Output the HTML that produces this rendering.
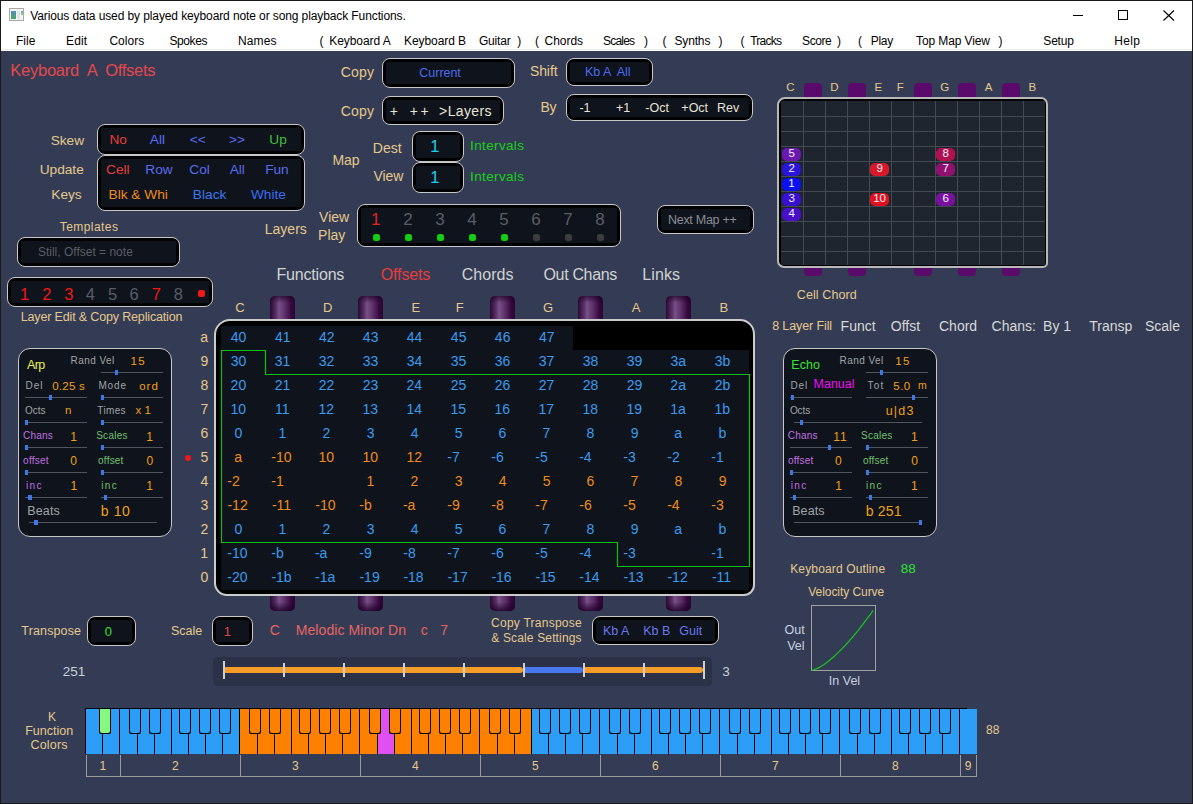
<!DOCTYPE html>
<html><head><meta charset="utf-8">
<style>
html,body{margin:0;padding:0;}
body{width:1193px;height:804px;overflow:hidden;position:relative;background:#333c54;font-family:"Liberation Sans",sans-serif;}
.t{position:absolute;white-space:pre;}
.r{position:absolute;}
svg.r{overflow:visible;}
</style></head><body>

<div class="r" style="left:0px;top:0px;width:1193px;height:51px;background:#fff"></div>
<div class="r" style="left:0px;top:49px;width:1193px;height:1px;background:#ececec"></div>
<div class="r" style="left:9px;top:8px;width:13px;height:11px;border:1px solid #a8a8a8;background:#f4f4f4"></div>
<div class="r" style="left:11px;top:11px;width:5px;height:8px;background:linear-gradient(#5a8ac0,#4aa860)"></div>
<div class="r" style="left:17px;top:11px;width:3px;height:8px;background:#e0e0e0"></div>
<div class="r" style="left:21px;top:11px;width:2px;height:4px;background:linear-gradient(#7aa0d0,#8ad080)"></div>
<div class="t" style="left:30.20px;top:9.94px;font-size:12px;line-height:12px;color:#000;letter-spacing:-0.104px;">Various data used by played keyboard note or song playback Functions.</div>
<div class="r" style="left:1073px;top:15px;width:10px;height:1px;background:#000"></div>
<div class="r" style="left:1118px;top:10px;width:8px;height:8px;border:1px solid #000"></div>
<svg class="r" style="left:1163px;top:10px" width="12" height="11"><path d="M0.5 0.5 L11 10.5 M11 0.5 L0.5 10.5" stroke="#000" stroke-width="1.1"/></svg>
<div class="t" style="left:16.00px;top:35.14px;font-size:12px;line-height:12px;color:#000;letter-spacing:0.033px;">File</div>
<div class="t" style="left:66.00px;top:35.14px;font-size:12px;line-height:12px;color:#000;letter-spacing:0.133px;">Edit</div>
<div class="t" style="left:109.40px;top:35.14px;font-size:12px;line-height:12px;color:#000;letter-spacing:0.060px;">Colors</div>
<div class="t" style="left:169.50px;top:35.14px;font-size:12px;line-height:12px;color:#000;letter-spacing:-0.420px;">Spokes</div>
<div class="t" style="left:238.00px;top:35.14px;font-size:12px;line-height:12px;color:#000;letter-spacing:0.100px;">Names</div>
<div class="t" style="left:319.50px;top:35.14px;font-size:12px;line-height:12px;color:#000;">(</div>
<div class="t" style="left:329.30px;top:35.14px;font-size:12px;line-height:12px;color:#000;letter-spacing:-0.078px;">Keyboard A</div>
<div class="t" style="left:404.00px;top:35.14px;font-size:12px;line-height:12px;color:#000;letter-spacing:-0.078px;">Keyboard B</div>
<div class="t" style="left:478.90px;top:35.14px;font-size:12px;line-height:12px;color:#000;letter-spacing:-0.160px;">Guitar</div>
<div class="t" style="left:517.30px;top:35.14px;font-size:12px;line-height:12px;color:#000;">)</div>
<div class="t" style="left:535.10px;top:35.14px;font-size:12px;line-height:12px;color:#000;">(</div>
<div class="t" style="left:544.60px;top:35.14px;font-size:12px;line-height:12px;color:#000;letter-spacing:-0.040px;">Chords</div>
<div class="t" style="left:603.00px;top:35.14px;font-size:12px;line-height:12px;color:#000;letter-spacing:-0.780px;">Scales</div>
<div class="t" style="left:643.90px;top:35.14px;font-size:12px;line-height:12px;color:#000;">)</div>
<div class="t" style="left:662.50px;top:35.14px;font-size:12px;line-height:12px;color:#000;">(</div>
<div class="t" style="left:674.50px;top:35.14px;font-size:12px;line-height:12px;color:#000;letter-spacing:-0.160px;">Synths</div>
<div class="t" style="left:718.40px;top:35.14px;font-size:12px;line-height:12px;color:#000;">)</div>
<div class="t" style="left:740.60px;top:35.14px;font-size:12px;line-height:12px;color:#000;">(</div>
<div class="t" style="left:750.20px;top:35.14px;font-size:12px;line-height:12px;color:#000;letter-spacing:-0.760px;">Tracks</div>
<div class="t" style="left:802.10px;top:35.14px;font-size:12px;line-height:12px;color:#000;letter-spacing:-0.425px;">Score</div>
<div class="t" style="left:836.90px;top:35.14px;font-size:12px;line-height:12px;color:#000;">)</div>
<div class="t" style="left:857.90px;top:35.14px;font-size:12px;line-height:12px;color:#000;">(</div>
<div class="t" style="left:870.80px;top:35.14px;font-size:12px;line-height:12px;color:#000;letter-spacing:-0.300px;">Play</div>
<div class="t" style="left:916.10px;top:35.14px;font-size:12px;line-height:12px;color:#000;letter-spacing:-0.118px;">Top Map View</div>
<div class="t" style="left:998.60px;top:35.14px;font-size:12px;line-height:12px;color:#000;">)</div>
<div class="t" style="left:1043.30px;top:35.14px;font-size:12px;line-height:12px;color:#000;letter-spacing:-0.175px;">Setup</div>
<div class="t" style="left:1114.30px;top:35.14px;font-size:12px;line-height:12px;color:#000;letter-spacing:0.300px;">Help</div>
<div class="t" style="left:10.35px;top:61.83px;font-size:16.5px;line-height:16.5px;color:#e5484d;letter-spacing:-0.258px;">Keyboard  A  Offsets</div>
<div class="t" style="left:340.70px;top:64.95px;font-size:14px;line-height:14px;color:#e6c88c;letter-spacing:0.200px;">Copy</div>
<div class="r" style="left:382px;top:58px;width:133px;height:30px;box-sizing:border-box;border:1px solid #c8c8c8;border-radius:8px;background:#000"></div>
<div class="r" style="left:386px;top:62px;width:125px;height:22px;background:#0f131b;border-radius:1px"></div>
<div class="t" style="left:419.35px;top:67.02px;font-size:12.5px;line-height:12.5px;color:#4a6cf0;letter-spacing:-0.033px;">Current</div>
<div class="t" style="left:340.70px;top:104.15px;font-size:14px;line-height:14px;color:#e6c88c;letter-spacing:0.200px;">Copy</div>
<div class="r" style="left:382px;top:96px;width:122px;height:29px;box-sizing:border-box;border:1px solid #c8c8c8;border-radius:8px;background:#000"></div>
<div class="r" style="left:386px;top:100px;width:114px;height:21px;background:#0f131b;border-radius:1px"></div>
<div class="t" style="left:389.70px;top:103.85px;font-size:14px;line-height:14px;color:#e8e4d8;">+</div>
<div class="t" style="left:409.80px;top:103.85px;font-size:14px;line-height:14px;color:#e8e4d8;letter-spacing:2.600px;">++</div>
<div class="t" style="left:439.10px;top:103.85px;font-size:14px;line-height:14px;color:#e8e4d8;letter-spacing:0.367px;">&gt;Layers</div>
<div class="t" style="left:529.90px;top:64.15px;font-size:14px;line-height:14px;color:#e6c88c;letter-spacing:-0.075px;">Shift</div>
<div class="r" style="left:566px;top:58px;width:87px;height:28px;box-sizing:border-box;border:1px solid #c8c8c8;border-radius:8px;background:#000"></div>
<div class="r" style="left:570px;top:62px;width:79px;height:20px;background:#0f131b;border-radius:1px"></div>
<div class="t" style="left:584.95px;top:66.12px;font-size:12.5px;line-height:12.5px;color:#4a6cf0;letter-spacing:-0.037px;">Kb A  All</div>
<div class="t" style="left:540.40px;top:100.45px;font-size:14px;line-height:14px;color:#e6c88c;letter-spacing:-0.200px;">By</div>
<div class="r" style="left:566px;top:94px;width:187px;height:27px;box-sizing:border-box;border:1px solid #c8c8c8;border-radius:8px;background:#000"></div>
<div class="r" style="left:570px;top:98px;width:179px;height:19px;background:#0f131b;border-radius:1px"></div>
<div class="t" style="left:579.45px;top:102.42px;font-size:12.5px;line-height:12.5px;color:#e8e4d8;">-1</div>
<div class="t" style="left:615.95px;top:102.42px;font-size:12.5px;line-height:12.5px;color:#e8e4d8;">+1</div>
<div class="t" style="left:645.25px;top:102.42px;font-size:12.5px;line-height:12.5px;color:#e8e4d8;">-Oct</div>
<div class="t" style="left:681.35px;top:102.42px;font-size:12.5px;line-height:12.5px;color:#e8e4d8;">+Oct</div>
<div class="t" style="left:716.95px;top:102.42px;font-size:12.5px;line-height:12.5px;color:#e8e4d8;">Rev</div>
<div class="t" style="left:50.65px;top:134.00px;font-size:13.7px;line-height:13.7px;color:#e6c88c;">Skew</div>
<div class="r" style="left:97px;top:124px;width:208px;height:31px;box-sizing:border-box;border:1px solid #c8c8c8;border-radius:8px;background:#000"></div>
<div class="r" style="left:101px;top:128px;width:200px;height:23px;background:#0f131b;border-radius:1px"></div>
<div class="t" style="left:109.45px;top:133.00px;font-size:13.7px;line-height:13.7px;color:#e83c3c;">No</div>
<div class="t" style="left:149.75px;top:133.00px;font-size:13.7px;line-height:13.7px;color:#5a6cf0;">All</div>
<div class="t" style="left:189.85px;top:133.00px;font-size:13.7px;line-height:13.7px;color:#5a6cf0;">&lt;&lt;</div>
<div class="t" style="left:229.05px;top:133.00px;font-size:13.7px;line-height:13.7px;color:#5a6cf0;">&gt;&gt;</div>
<div class="t" style="left:269.35px;top:133.00px;font-size:13.7px;line-height:13.7px;color:#40c040;">Up</div>
<div class="t" style="left:39.65px;top:163.40px;font-size:13.7px;line-height:13.7px;color:#e6c88c;">Update</div>
<div class="r" style="left:97px;top:155px;width:208px;height:56px;box-sizing:border-box;border:1px solid #c8c8c8;border-radius:8px;background:#000"></div>
<div class="r" style="left:101px;top:159px;width:200px;height:48px;background:#0f131b;border-radius:1px"></div>
<div class="t" style="left:106.05px;top:163.40px;font-size:13.7px;line-height:13.7px;color:#e83c3c;">Cell</div>
<div class="t" style="left:145.25px;top:163.40px;font-size:13.7px;line-height:13.7px;color:#5a6cf0;">Row</div>
<div class="t" style="left:189.25px;top:163.40px;font-size:13.7px;line-height:13.7px;color:#5a6cf0;">Col</div>
<div class="t" style="left:229.65px;top:163.40px;font-size:13.7px;line-height:13.7px;color:#5a6cf0;">All</div>
<div class="t" style="left:265.15px;top:163.40px;font-size:13.7px;line-height:13.7px;color:#5a6cf0;">Fun</div>
<div class="t" style="left:51.25px;top:188.10px;font-size:13.7px;line-height:13.7px;color:#e6c88c;">Keys</div>
<div class="t" style="left:108.55px;top:188.10px;font-size:13.7px;line-height:13.7px;color:#f08c1c;">Blk &amp; Whi</div>
<div class="t" style="left:192.85px;top:188.10px;font-size:13.7px;line-height:13.7px;color:#3c78f0;">Black</div>
<div class="t" style="left:250.95px;top:188.10px;font-size:13.7px;line-height:13.7px;color:#3c6cf0;">White</div>
<div class="t" style="left:332.40px;top:152.85px;font-size:14px;line-height:14px;color:#e6c88c;">Map</div>
<div class="t" style="left:372.80px;top:140.85px;font-size:14px;line-height:14px;color:#e6c88c;">Dest</div>
<div class="t" style="left:373.40px;top:168.55px;font-size:14px;line-height:14px;color:#e6c88c;">View</div>
<div class="r" style="left:412px;top:131px;width:52px;height:31px;box-sizing:border-box;border:1px solid #c8c8c8;border-radius:8px;background:#000"></div>
<div class="r" style="left:416px;top:135px;width:44px;height:23px;background:#0f131b;border-radius:1px"></div>
<div class="r" style="left:412px;top:162px;width:52px;height:31px;box-sizing:border-box;border:1px solid #c8c8c8;border-radius:8px;background:#000"></div>
<div class="r" style="left:416px;top:166px;width:44px;height:23px;background:#0f131b;border-radius:1px"></div>
<div class="t" style="left:430.25px;top:138.33px;font-size:16.5px;line-height:16.5px;color:#18d0f0;">1</div>
<div class="t" style="left:430.25px;top:169.13px;font-size:16.5px;line-height:16.5px;color:#18d0f0;">1</div>
<div class="t" style="left:470.05px;top:139.37px;font-size:13.5px;line-height:13.5px;color:#18d018;letter-spacing:0.363px;">Intervals</div>
<div class="t" style="left:470.05px;top:170.17px;font-size:13.5px;line-height:13.5px;color:#18d018;letter-spacing:0.363px;">Intervals</div>
<div class="t" style="left:264.80px;top:221.65px;font-size:14px;line-height:14px;color:#e6c88c;">Layers</div>
<div class="t" style="left:319.10px;top:209.85px;font-size:14px;line-height:14px;color:#e6c88c;">View</div>
<div class="t" style="left:318.10px;top:228.45px;font-size:14px;line-height:14px;color:#e6c88c;">Play</div>
<div class="r" style="left:357px;top:204px;width:264px;height:43px;box-sizing:border-box;border:1px solid #c8c8c8;border-radius:8px;background:#000"></div>
<div class="r" style="left:361px;top:208px;width:256px;height:35px;background:#0f131b;border-radius:1px"></div>
<div class="t" style="left:371.00px;top:210.71px;font-size:17px;line-height:17px;color:#e02828;">1</div>
<div class="r" style="left:372.5px;top:233.9px;width:7.1px;height:7.1px;background:#10d010;border-radius:2.5px"></div>
<div class="t" style="left:403.30px;top:210.71px;font-size:17px;line-height:17px;color:#5a5e66;">2</div>
<div class="r" style="left:404.5px;top:233.9px;width:7.1px;height:7.1px;background:#10d010;border-radius:2.5px"></div>
<div class="t" style="left:435.35px;top:210.71px;font-size:17px;line-height:17px;color:#5a5e66;">3</div>
<div class="r" style="left:436.5px;top:233.9px;width:7.1px;height:7.1px;background:#10d010;border-radius:2.5px"></div>
<div class="t" style="left:467.30px;top:210.71px;font-size:17px;line-height:17px;color:#5a5e66;">4</div>
<div class="r" style="left:468.5px;top:233.9px;width:7.1px;height:7.1px;background:#10d010;border-radius:2.5px"></div>
<div class="t" style="left:499.25px;top:210.71px;font-size:17px;line-height:17px;color:#5a5e66;">5</div>
<div class="r" style="left:500.5px;top:233.9px;width:7.1px;height:7.1px;background:#10d010;border-radius:2.5px"></div>
<div class="t" style="left:531.25px;top:210.71px;font-size:17px;line-height:17px;color:#5a5e66;">6</div>
<div class="r" style="left:532.5px;top:233.9px;width:7.1px;height:7.1px;background:#3c3c3c;border-radius:2.5px"></div>
<div class="t" style="left:563.30px;top:210.71px;font-size:17px;line-height:17px;color:#5a5e66;">7</div>
<div class="r" style="left:564.5px;top:233.9px;width:7.1px;height:7.1px;background:#3c3c3c;border-radius:2.5px"></div>
<div class="t" style="left:595.30px;top:210.71px;font-size:17px;line-height:17px;color:#5a5e66;">8</div>
<div class="r" style="left:596.5px;top:233.9px;width:7.1px;height:7.1px;background:#3c3c3c;border-radius:2.5px"></div>
<div class="t" style="left:59.80px;top:220.84px;font-size:12px;line-height:12px;color:#e6c88c;letter-spacing:0.425px;">Templates</div>
<div class="r" style="left:17px;top:237px;width:163px;height:30px;box-sizing:border-box;border:1px solid #c8c8c8;border-radius:8px;background:#000"></div>
<div class="r" style="left:21px;top:241px;width:155px;height:22px;background:#0f131b;border-radius:1px"></div>
<div class="t" style="left:37.90px;top:245.84px;font-size:12px;line-height:12px;color:#5a5e66;letter-spacing:0.005px;">Still, Offset = note</div>
<div class="r" style="left:7px;top:277px;width:206px;height:30px;box-sizing:border-box;border:1px solid #c8c8c8;border-radius:8px;background:#000"></div>
<div class="r" style="left:11px;top:281px;width:198px;height:22px;background:#0f131b;border-radius:1px"></div>
<div class="t" style="left:20.05px;top:285.83px;font-size:16.5px;line-height:16.5px;color:#f01818;">1</div>
<div class="t" style="left:42.35px;top:285.83px;font-size:16.5px;line-height:16.5px;color:#f01818;">2</div>
<div class="t" style="left:64.20px;top:285.83px;font-size:16.5px;line-height:16.5px;color:#f01818;">3</div>
<div class="t" style="left:85.80px;top:285.83px;font-size:16.5px;line-height:16.5px;color:#5a5e66;">4</div>
<div class="t" style="left:107.90px;top:285.83px;font-size:16.5px;line-height:16.5px;color:#5a5e66;">5</div>
<div class="t" style="left:129.60px;top:285.83px;font-size:16.5px;line-height:16.5px;color:#5a5e66;">6</div>
<div class="t" style="left:151.85px;top:285.83px;font-size:16.5px;line-height:16.5px;color:#f01818;">7</div>
<div class="t" style="left:173.75px;top:285.83px;font-size:16.5px;line-height:16.5px;color:#5a5e66;">8</div>
<div class="r" style="left:198px;top:290px;width:7px;height:7px;background:#f01818;border-radius:2px"></div>
<div class="t" style="left:20.75px;top:311.42px;font-size:12.5px;line-height:12.5px;color:#e6c88c;letter-spacing:-0.154px;">Layer Edit &amp; Copy Replication</div>
<div class="r" style="left:657px;top:205px;width:97px;height:29px;box-sizing:border-box;border:1px solid #c8c8c8;border-radius:8px;background:#000"></div>
<div class="r" style="left:661px;top:209px;width:89px;height:21px;background:#0f131b;border-radius:1px"></div>
<div class="t" style="left:667.95px;top:213.72px;font-size:12.5px;line-height:12.5px;color:#8a8e96;letter-spacing:-0.270px;">Next Map ++</div>
<div class="t" style="left:276.50px;top:266.56px;font-size:16px;line-height:16px;color:#d2d2d2;letter-spacing:-0.188px;">Functions</div>
<div class="t" style="left:380.80px;top:266.56px;font-size:16px;line-height:16px;color:#e83c3c;letter-spacing:-0.150px;">Offsets</div>
<div class="t" style="left:461.80px;top:266.56px;font-size:16px;line-height:16px;color:#d2d2d2;letter-spacing:0.020px;">Chords</div>
<div class="t" style="left:543.50px;top:266.56px;font-size:16px;line-height:16px;color:#d2d2d2;letter-spacing:-0.338px;">Out Chans</div>
<div class="t" style="left:642.20px;top:266.56px;font-size:16px;line-height:16px;color:#d2d2d2;letter-spacing:0.125px;">Links</div>
<div class="t" style="left:235.25px;top:301.00px;font-size:13px;line-height:13px;color:#e6c88c;">C</div>
<div class="r" style="left:270.25px;top:296px;width:25px;height:23px;border-radius:5px 5px 0 0;background:linear-gradient(90deg,#2a0834 0%,#5a3468 25%,#7a5088 36%,#5c3068 60%,#36083e 85%,#2a0632 100%)"></div>
<div class="r" style="left:270.25px;top:296px;width:25px;height:7px;border-radius:5px 5px 0 0;background:linear-gradient(rgba(30,0,40,0.7),rgba(30,0,40,0))"></div>
<div class="r" style="left:270.25px;top:595px;width:25px;height:16px;border-radius:0 0 5px 5px;background:linear-gradient(90deg,#2a0834 0%,#5a3468 25%,#7a5088 36%,#5c3068 60%,#36083e 85%,#2a0632 100%)"></div>
<div class="r" style="left:270.25px;top:602px;width:25px;height:9px;border-radius:0 0 5px 5px;background:linear-gradient(rgba(30,0,40,0),rgba(30,0,40,0.85))"></div>
<div class="t" style="left:323.10px;top:301.00px;font-size:13px;line-height:13px;color:#e6c88c;">D</div>
<div class="r" style="left:358.25px;top:296px;width:25px;height:23px;border-radius:5px 5px 0 0;background:linear-gradient(90deg,#2a0834 0%,#5a3468 25%,#7a5088 36%,#5c3068 60%,#36083e 85%,#2a0632 100%)"></div>
<div class="r" style="left:358.25px;top:296px;width:25px;height:7px;border-radius:5px 5px 0 0;background:linear-gradient(rgba(30,0,40,0.7),rgba(30,0,40,0))"></div>
<div class="r" style="left:358.25px;top:595px;width:25px;height:16px;border-radius:0 0 5px 5px;background:linear-gradient(90deg,#2a0834 0%,#5a3468 25%,#7a5088 36%,#5c3068 60%,#36083e 85%,#2a0632 100%)"></div>
<div class="r" style="left:358.25px;top:602px;width:25px;height:9px;border-radius:0 0 5px 5px;background:linear-gradient(rgba(30,0,40,0),rgba(30,0,40,0.85))"></div>
<div class="t" style="left:411.45px;top:301.00px;font-size:13px;line-height:13px;color:#e6c88c;">E</div>
<div class="t" style="left:455.80px;top:301.00px;font-size:13px;line-height:13px;color:#e6c88c;">F</div>
<div class="r" style="left:490.25px;top:296px;width:25px;height:23px;border-radius:5px 5px 0 0;background:linear-gradient(90deg,#2a0834 0%,#5a3468 25%,#7a5088 36%,#5c3068 60%,#36083e 85%,#2a0632 100%)"></div>
<div class="r" style="left:490.25px;top:296px;width:25px;height:7px;border-radius:5px 5px 0 0;background:linear-gradient(rgba(30,0,40,0.7),rgba(30,0,40,0))"></div>
<div class="r" style="left:490.25px;top:595px;width:25px;height:16px;border-radius:0 0 5px 5px;background:linear-gradient(90deg,#2a0834 0%,#5a3468 25%,#7a5088 36%,#5c3068 60%,#36083e 85%,#2a0632 100%)"></div>
<div class="r" style="left:490.25px;top:602px;width:25px;height:9px;border-radius:0 0 5px 5px;background:linear-gradient(rgba(30,0,40,0),rgba(30,0,40,0.85))"></div>
<div class="t" style="left:543.10px;top:301.00px;font-size:13px;line-height:13px;color:#e6c88c;">G</div>
<div class="r" style="left:578.25px;top:296px;width:25px;height:23px;border-radius:5px 5px 0 0;background:linear-gradient(90deg,#2a0834 0%,#5a3468 25%,#7a5088 36%,#5c3068 60%,#36083e 85%,#2a0632 100%)"></div>
<div class="r" style="left:578.25px;top:296px;width:25px;height:7px;border-radius:5px 5px 0 0;background:linear-gradient(rgba(30,0,40,0.7),rgba(30,0,40,0))"></div>
<div class="r" style="left:578.25px;top:595px;width:25px;height:16px;border-radius:0 0 5px 5px;background:linear-gradient(90deg,#2a0834 0%,#5a3468 25%,#7a5088 36%,#5c3068 60%,#36083e 85%,#2a0632 100%)"></div>
<div class="r" style="left:578.25px;top:602px;width:25px;height:9px;border-radius:0 0 5px 5px;background:linear-gradient(rgba(30,0,40,0),rgba(30,0,40,0.85))"></div>
<div class="t" style="left:631.65px;top:301.00px;font-size:13px;line-height:13px;color:#e6c88c;">A</div>
<div class="r" style="left:666.25px;top:296px;width:25px;height:23px;border-radius:5px 5px 0 0;background:linear-gradient(90deg,#2a0834 0%,#5a3468 25%,#7a5088 36%,#5c3068 60%,#36083e 85%,#2a0632 100%)"></div>
<div class="r" style="left:666.25px;top:296px;width:25px;height:7px;border-radius:5px 5px 0 0;background:linear-gradient(rgba(30,0,40,0.7),rgba(30,0,40,0))"></div>
<div class="r" style="left:666.25px;top:595px;width:25px;height:16px;border-radius:0 0 5px 5px;background:linear-gradient(90deg,#2a0834 0%,#5a3468 25%,#7a5088 36%,#5c3068 60%,#36083e 85%,#2a0632 100%)"></div>
<div class="r" style="left:666.25px;top:602px;width:25px;height:9px;border-radius:0 0 5px 5px;background:linear-gradient(rgba(30,0,40,0),rgba(30,0,40,0.85))"></div>
<div class="t" style="left:719.50px;top:301.00px;font-size:13px;line-height:13px;color:#e6c88c;">B</div>
<div class="r" style="left:214px;top:319px;width:541px;height:277px;box-sizing:border-box;border:2px solid #cccccc;border-radius:16px 15px 11px 13px;background:#000"></div>
<div class="r" style="left:221px;top:326px;width:352px;height:24px;background:#0f131b"></div>
<div class="r" style="left:221px;top:350px;width:528px;height:240px;background:#0f131b"></div>
<div class="t" style="left:200.20px;top:329.65px;font-size:14px;line-height:14px;color:#e6c88c;">a</div>
<div class="t" style="left:230.80px;top:329.65px;font-size:14px;line-height:14px;color:#3a9cf0;">40</div>
<div class="t" style="left:274.90px;top:329.65px;font-size:14px;line-height:14px;color:#3a9cf0;">41</div>
<div class="t" style="left:318.90px;top:329.65px;font-size:14px;line-height:14px;color:#3a9cf0;">42</div>
<div class="t" style="left:362.85px;top:329.65px;font-size:14px;line-height:14px;color:#3a9cf0;">43</div>
<div class="t" style="left:406.75px;top:329.65px;font-size:14px;line-height:14px;color:#3a9cf0;">44</div>
<div class="t" style="left:450.85px;top:329.65px;font-size:14px;line-height:14px;color:#3a9cf0;">45</div>
<div class="t" style="left:494.85px;top:329.65px;font-size:14px;line-height:14px;color:#3a9cf0;">46</div>
<div class="t" style="left:538.90px;top:329.65px;font-size:14px;line-height:14px;color:#3a9cf0;">47</div>
<div class="t" style="left:200.55px;top:353.65px;font-size:14px;line-height:14px;color:#e6c88c;">9</div>
<div class="t" style="left:230.70px;top:353.65px;font-size:14px;line-height:14px;color:#3a9cf0;">30</div>
<div class="t" style="left:274.80px;top:353.65px;font-size:14px;line-height:14px;color:#3a9cf0;">31</div>
<div class="t" style="left:318.80px;top:353.65px;font-size:14px;line-height:14px;color:#3a9cf0;">32</div>
<div class="t" style="left:362.75px;top:353.65px;font-size:14px;line-height:14px;color:#3a9cf0;">33</div>
<div class="t" style="left:406.65px;top:353.65px;font-size:14px;line-height:14px;color:#3a9cf0;">34</div>
<div class="t" style="left:450.75px;top:353.65px;font-size:14px;line-height:14px;color:#3a9cf0;">35</div>
<div class="t" style="left:494.75px;top:353.65px;font-size:14px;line-height:14px;color:#3a9cf0;">36</div>
<div class="t" style="left:538.80px;top:353.65px;font-size:14px;line-height:14px;color:#3a9cf0;">37</div>
<div class="t" style="left:582.75px;top:353.65px;font-size:14px;line-height:14px;color:#3a9cf0;">38</div>
<div class="t" style="left:626.80px;top:353.65px;font-size:14px;line-height:14px;color:#3a9cf0;">39</div>
<div class="t" style="left:670.45px;top:353.65px;font-size:14px;line-height:14px;color:#3a9cf0;">3a</div>
<div class="t" style="left:714.75px;top:353.65px;font-size:14px;line-height:14px;color:#3a9cf0;">3b</div>
<div class="t" style="left:200.50px;top:377.65px;font-size:14px;line-height:14px;color:#e6c88c;">8</div>
<div class="t" style="left:230.60px;top:377.65px;font-size:14px;line-height:14px;color:#3a9cf0;">20</div>
<div class="t" style="left:274.70px;top:377.65px;font-size:14px;line-height:14px;color:#3a9cf0;">21</div>
<div class="t" style="left:318.70px;top:377.65px;font-size:14px;line-height:14px;color:#3a9cf0;">22</div>
<div class="t" style="left:362.65px;top:377.65px;font-size:14px;line-height:14px;color:#3a9cf0;">23</div>
<div class="t" style="left:406.55px;top:377.65px;font-size:14px;line-height:14px;color:#3a9cf0;">24</div>
<div class="t" style="left:450.65px;top:377.65px;font-size:14px;line-height:14px;color:#3a9cf0;">25</div>
<div class="t" style="left:494.65px;top:377.65px;font-size:14px;line-height:14px;color:#3a9cf0;">26</div>
<div class="t" style="left:538.70px;top:377.65px;font-size:14px;line-height:14px;color:#3a9cf0;">27</div>
<div class="t" style="left:582.65px;top:377.65px;font-size:14px;line-height:14px;color:#3a9cf0;">28</div>
<div class="t" style="left:626.70px;top:377.65px;font-size:14px;line-height:14px;color:#3a9cf0;">29</div>
<div class="t" style="left:670.35px;top:377.65px;font-size:14px;line-height:14px;color:#3a9cf0;">2a</div>
<div class="t" style="left:714.65px;top:377.65px;font-size:14px;line-height:14px;color:#3a9cf0;">2b</div>
<div class="t" style="left:200.50px;top:401.65px;font-size:14px;line-height:14px;color:#e6c88c;">7</div>
<div class="t" style="left:230.45px;top:401.65px;font-size:14px;line-height:14px;color:#3a9cf0;">10</div>
<div class="t" style="left:275.10px;top:401.65px;font-size:14px;line-height:14px;color:#3a9cf0;">11</div>
<div class="t" style="left:318.55px;top:401.65px;font-size:14px;line-height:14px;color:#3a9cf0;">12</div>
<div class="t" style="left:362.50px;top:401.65px;font-size:14px;line-height:14px;color:#3a9cf0;">13</div>
<div class="t" style="left:406.40px;top:401.65px;font-size:14px;line-height:14px;color:#3a9cf0;">14</div>
<div class="t" style="left:450.50px;top:401.65px;font-size:14px;line-height:14px;color:#3a9cf0;">15</div>
<div class="t" style="left:494.50px;top:401.65px;font-size:14px;line-height:14px;color:#3a9cf0;">16</div>
<div class="t" style="left:538.55px;top:401.65px;font-size:14px;line-height:14px;color:#3a9cf0;">17</div>
<div class="t" style="left:582.50px;top:401.65px;font-size:14px;line-height:14px;color:#3a9cf0;">18</div>
<div class="t" style="left:626.55px;top:401.65px;font-size:14px;line-height:14px;color:#3a9cf0;">19</div>
<div class="t" style="left:670.20px;top:401.65px;font-size:14px;line-height:14px;color:#3a9cf0;">1a</div>
<div class="t" style="left:714.50px;top:401.65px;font-size:14px;line-height:14px;color:#3a9cf0;">1b</div>
<div class="t" style="left:200.45px;top:425.65px;font-size:14px;line-height:14px;color:#e6c88c;">6</div>
<div class="t" style="left:234.60px;top:425.65px;font-size:14px;line-height:14px;color:#3a9cf0;">0</div>
<div class="t" style="left:278.45px;top:425.65px;font-size:14px;line-height:14px;color:#3a9cf0;">1</div>
<div class="t" style="left:322.60px;top:425.65px;font-size:14px;line-height:14px;color:#3a9cf0;">2</div>
<div class="t" style="left:366.65px;top:425.65px;font-size:14px;line-height:14px;color:#3a9cf0;">3</div>
<div class="t" style="left:410.65px;top:425.65px;font-size:14px;line-height:14px;color:#3a9cf0;">4</div>
<div class="t" style="left:454.65px;top:425.65px;font-size:14px;line-height:14px;color:#3a9cf0;">5</div>
<div class="t" style="left:498.55px;top:425.65px;font-size:14px;line-height:14px;color:#3a9cf0;">6</div>
<div class="t" style="left:542.60px;top:425.65px;font-size:14px;line-height:14px;color:#3a9cf0;">7</div>
<div class="t" style="left:586.60px;top:425.65px;font-size:14px;line-height:14px;color:#3a9cf0;">8</div>
<div class="t" style="left:630.65px;top:425.65px;font-size:14px;line-height:14px;color:#3a9cf0;">9</div>
<div class="t" style="left:674.30px;top:425.65px;font-size:14px;line-height:14px;color:#3a9cf0;">a</div>
<div class="t" style="left:718.45px;top:425.65px;font-size:14px;line-height:14px;color:#3a9cf0;">b</div>
<div class="t" style="left:200.55px;top:449.65px;font-size:14px;line-height:14px;color:#e6c88c;">5</div>
<div class="t" style="left:234.30px;top:449.65px;font-size:14px;line-height:14px;color:#f08c1c;">a</div>
<div class="t" style="left:271.35px;top:449.65px;font-size:14px;line-height:14px;color:#f08c1c;">-10</div>
<div class="t" style="left:318.45px;top:449.65px;font-size:14px;line-height:14px;color:#f08c1c;">10</div>
<div class="t" style="left:362.45px;top:449.65px;font-size:14px;line-height:14px;color:#f08c1c;">10</div>
<div class="t" style="left:406.55px;top:449.65px;font-size:14px;line-height:14px;color:#f08c1c;">12</div>
<div class="t" style="left:447.30px;top:449.65px;font-size:14px;line-height:14px;color:#3a9cf0;">-7</div>
<div class="t" style="left:491.25px;top:449.65px;font-size:14px;line-height:14px;color:#3a9cf0;">-6</div>
<div class="t" style="left:535.25px;top:449.65px;font-size:14px;line-height:14px;color:#3a9cf0;">-5</div>
<div class="t" style="left:579.15px;top:449.65px;font-size:14px;line-height:14px;color:#3a9cf0;">-4</div>
<div class="t" style="left:623.25px;top:449.65px;font-size:14px;line-height:14px;color:#3a9cf0;">-3</div>
<div class="t" style="left:667.30px;top:449.65px;font-size:14px;line-height:14px;color:#3a9cf0;">-2</div>
<div class="t" style="left:711.30px;top:449.65px;font-size:14px;line-height:14px;color:#3a9cf0;">-1</div>
<div class="t" style="left:200.55px;top:473.65px;font-size:14px;line-height:14px;color:#e6c88c;">4</div>
<div class="t" style="left:227.30px;top:473.65px;font-size:14px;line-height:14px;color:#f08c1c;">-2</div>
<div class="t" style="left:271.30px;top:473.65px;font-size:14px;line-height:14px;color:#f08c1c;">-1</div>
<div class="t" style="left:366.45px;top:473.65px;font-size:14px;line-height:14px;color:#f08c1c;">1</div>
<div class="t" style="left:410.60px;top:473.65px;font-size:14px;line-height:14px;color:#f08c1c;">2</div>
<div class="t" style="left:454.65px;top:473.65px;font-size:14px;line-height:14px;color:#f08c1c;">3</div>
<div class="t" style="left:498.65px;top:473.65px;font-size:14px;line-height:14px;color:#f08c1c;">4</div>
<div class="t" style="left:542.65px;top:473.65px;font-size:14px;line-height:14px;color:#f08c1c;">5</div>
<div class="t" style="left:586.55px;top:473.65px;font-size:14px;line-height:14px;color:#f08c1c;">6</div>
<div class="t" style="left:630.60px;top:473.65px;font-size:14px;line-height:14px;color:#f08c1c;">7</div>
<div class="t" style="left:674.60px;top:473.65px;font-size:14px;line-height:14px;color:#f08c1c;">8</div>
<div class="t" style="left:718.65px;top:473.65px;font-size:14px;line-height:14px;color:#f08c1c;">9</div>
<div class="t" style="left:200.55px;top:497.65px;font-size:14px;line-height:14px;color:#e6c88c;">3</div>
<div class="t" style="left:227.45px;top:497.65px;font-size:14px;line-height:14px;color:#f08c1c;">-12</div>
<div class="t" style="left:271.95px;top:497.65px;font-size:14px;line-height:14px;color:#f08c1c;">-11</div>
<div class="t" style="left:315.35px;top:497.65px;font-size:14px;line-height:14px;color:#f08c1c;">-10</div>
<div class="t" style="left:359.25px;top:497.65px;font-size:14px;line-height:14px;color:#f08c1c;">-b</div>
<div class="t" style="left:402.95px;top:497.65px;font-size:14px;line-height:14px;color:#f08c1c;">-a</div>
<div class="t" style="left:447.30px;top:497.65px;font-size:14px;line-height:14px;color:#f08c1c;">-9</div>
<div class="t" style="left:491.25px;top:497.65px;font-size:14px;line-height:14px;color:#f08c1c;">-8</div>
<div class="t" style="left:535.30px;top:497.65px;font-size:14px;line-height:14px;color:#f08c1c;">-7</div>
<div class="t" style="left:579.25px;top:497.65px;font-size:14px;line-height:14px;color:#f08c1c;">-6</div>
<div class="t" style="left:623.25px;top:497.65px;font-size:14px;line-height:14px;color:#f08c1c;">-5</div>
<div class="t" style="left:667.15px;top:497.65px;font-size:14px;line-height:14px;color:#f08c1c;">-4</div>
<div class="t" style="left:711.25px;top:497.65px;font-size:14px;line-height:14px;color:#f08c1c;">-3</div>
<div class="t" style="left:200.50px;top:521.65px;font-size:14px;line-height:14px;color:#e6c88c;">2</div>
<div class="t" style="left:234.60px;top:521.65px;font-size:14px;line-height:14px;color:#3a9cf0;">0</div>
<div class="t" style="left:278.45px;top:521.65px;font-size:14px;line-height:14px;color:#3a9cf0;">1</div>
<div class="t" style="left:322.60px;top:521.65px;font-size:14px;line-height:14px;color:#3a9cf0;">2</div>
<div class="t" style="left:366.65px;top:521.65px;font-size:14px;line-height:14px;color:#3a9cf0;">3</div>
<div class="t" style="left:410.65px;top:521.65px;font-size:14px;line-height:14px;color:#3a9cf0;">4</div>
<div class="t" style="left:454.65px;top:521.65px;font-size:14px;line-height:14px;color:#3a9cf0;">5</div>
<div class="t" style="left:498.55px;top:521.65px;font-size:14px;line-height:14px;color:#3a9cf0;">6</div>
<div class="t" style="left:542.60px;top:521.65px;font-size:14px;line-height:14px;color:#3a9cf0;">7</div>
<div class="t" style="left:586.60px;top:521.65px;font-size:14px;line-height:14px;color:#3a9cf0;">8</div>
<div class="t" style="left:630.65px;top:521.65px;font-size:14px;line-height:14px;color:#3a9cf0;">9</div>
<div class="t" style="left:674.30px;top:521.65px;font-size:14px;line-height:14px;color:#3a9cf0;">a</div>
<div class="t" style="left:718.45px;top:521.65px;font-size:14px;line-height:14px;color:#3a9cf0;">b</div>
<div class="t" style="left:200.35px;top:545.65px;font-size:14px;line-height:14px;color:#e6c88c;">1</div>
<div class="t" style="left:227.35px;top:545.65px;font-size:14px;line-height:14px;color:#3a9cf0;">-10</div>
<div class="t" style="left:271.25px;top:545.65px;font-size:14px;line-height:14px;color:#3a9cf0;">-b</div>
<div class="t" style="left:314.95px;top:545.65px;font-size:14px;line-height:14px;color:#3a9cf0;">-a</div>
<div class="t" style="left:359.30px;top:545.65px;font-size:14px;line-height:14px;color:#3a9cf0;">-9</div>
<div class="t" style="left:403.25px;top:545.65px;font-size:14px;line-height:14px;color:#3a9cf0;">-8</div>
<div class="t" style="left:447.30px;top:545.65px;font-size:14px;line-height:14px;color:#3a9cf0;">-7</div>
<div class="t" style="left:491.25px;top:545.65px;font-size:14px;line-height:14px;color:#3a9cf0;">-6</div>
<div class="t" style="left:535.25px;top:545.65px;font-size:14px;line-height:14px;color:#3a9cf0;">-5</div>
<div class="t" style="left:579.15px;top:545.65px;font-size:14px;line-height:14px;color:#3a9cf0;">-4</div>
<div class="t" style="left:623.25px;top:545.65px;font-size:14px;line-height:14px;color:#3a9cf0;">-3</div>
<div class="t" style="left:711.30px;top:545.65px;font-size:14px;line-height:14px;color:#3a9cf0;">-1</div>
<div class="t" style="left:200.50px;top:569.65px;font-size:14px;line-height:14px;color:#e6c88c;">0</div>
<div class="t" style="left:227.35px;top:569.65px;font-size:14px;line-height:14px;color:#3a9cf0;">-20</div>
<div class="t" style="left:271.40px;top:569.65px;font-size:14px;line-height:14px;color:#3a9cf0;">-1b</div>
<div class="t" style="left:315.10px;top:569.65px;font-size:14px;line-height:14px;color:#3a9cf0;">-1a</div>
<div class="t" style="left:359.45px;top:569.65px;font-size:14px;line-height:14px;color:#3a9cf0;">-19</div>
<div class="t" style="left:403.40px;top:569.65px;font-size:14px;line-height:14px;color:#3a9cf0;">-18</div>
<div class="t" style="left:447.45px;top:569.65px;font-size:14px;line-height:14px;color:#3a9cf0;">-17</div>
<div class="t" style="left:491.40px;top:569.65px;font-size:14px;line-height:14px;color:#3a9cf0;">-16</div>
<div class="t" style="left:535.40px;top:569.65px;font-size:14px;line-height:14px;color:#3a9cf0;">-15</div>
<div class="t" style="left:579.30px;top:569.65px;font-size:14px;line-height:14px;color:#3a9cf0;">-14</div>
<div class="t" style="left:623.40px;top:569.65px;font-size:14px;line-height:14px;color:#3a9cf0;">-13</div>
<div class="t" style="left:667.45px;top:569.65px;font-size:14px;line-height:14px;color:#3a9cf0;">-12</div>
<div class="t" style="left:711.95px;top:569.65px;font-size:14px;line-height:14px;color:#3a9cf0;">-11</div>
<div class="r" style="left:185px;top:454.5px;width:6px;height:6px;background:#f01818;border-radius:3px"></div>
<svg class="r" style="left:0;top:0" width="1193" height="804"><path d="M221.5 350.5 H265.5 V374.5 H749.5 V566.5 H617.5 V542.5 H221.5 Z" fill="none" stroke="#10c010" stroke-width="1.2"/></svg>
<div class="t" style="left:786.30px;top:82.27px;font-size:11.5px;line-height:11.5px;color:#e6c88c;">C</div>
<div class="r" style="left:804.1px;top:83px;width:18px;height:14.5px;background:#5a0a6a;border-radius:4px 4px 0 0"></div>
<div class="r" style="left:804.1px;top:267.5px;width:18px;height:8px;background:#5a0a6a;border-radius:0 0 4px 4px"></div>
<div class="t" style="left:830.20px;top:82.27px;font-size:11.5px;line-height:11.5px;color:#e6c88c;">D</div>
<div class="r" style="left:848.1px;top:83px;width:18px;height:14.5px;background:#5a0a6a;border-radius:4px 4px 0 0"></div>
<div class="r" style="left:848.1px;top:267.5px;width:18px;height:8px;background:#5a0a6a;border-radius:0 0 4px 4px"></div>
<div class="t" style="left:874.50px;top:82.27px;font-size:11.5px;line-height:11.5px;color:#e6c88c;">E</div>
<div class="t" style="left:896.80px;top:82.27px;font-size:11.5px;line-height:11.5px;color:#e6c88c;">F</div>
<div class="r" style="left:914.1px;top:83px;width:18px;height:14.5px;background:#5a0a6a;border-radius:4px 4px 0 0"></div>
<div class="r" style="left:914.1px;top:267.5px;width:18px;height:8px;background:#5a0a6a;border-radius:0 0 4px 4px"></div>
<div class="t" style="left:940.20px;top:82.27px;font-size:11.5px;line-height:11.5px;color:#e6c88c;">G</div>
<div class="r" style="left:958.1px;top:83px;width:18px;height:14.5px;background:#5a0a6a;border-radius:4px 4px 0 0"></div>
<div class="r" style="left:958.1px;top:267.5px;width:18px;height:8px;background:#5a0a6a;border-radius:0 0 4px 4px"></div>
<div class="t" style="left:984.70px;top:82.27px;font-size:11.5px;line-height:11.5px;color:#e6c88c;">A</div>
<div class="r" style="left:1002.1px;top:83px;width:18px;height:14.5px;background:#5a0a6a;border-radius:4px 4px 0 0"></div>
<div class="r" style="left:1002.1px;top:267.5px;width:18px;height:8px;background:#5a0a6a;border-radius:0 0 4px 4px"></div>
<div class="t" style="left:1028.55px;top:82.27px;font-size:11.5px;line-height:11.5px;color:#e6c88c;">B</div>
<div class="r" style="left:777px;top:97px;width:271px;height:171px;box-sizing:border-box;border:2px solid #b8b8b8;border-radius:8px 7px 5px 7px;background:#000"></div>
<div class="r" style="left:781px;top:101px;width:264px;height:164px;background:#1e252e"></div>
<svg class="r" style="left:0;top:0" width="1193" height="804"><path d="M803.5 101 V265 M825.5 101 V265 M847.5 101 V265 M869.5 101 V265 M891.5 101 V265 M913.5 101 V265 M935.5 101 V265 M957.5 101 V265 M979.5 101 V265 M1001.5 101 V265 M1023.5 101 V265 M781 116.5 H1044.5 M781 131.5 H1044.5 M781 146.5 H1044.5 M781 161.5 H1044.5 M781 176.5 H1044.5 M781 191.5 H1044.5 M781 206.5 H1044.5 M781 221.5 H1044.5 M781 236.5 H1044.5 M781 251.5 H1044.5" stroke="#434a52" stroke-width="1"/></svg>
<div class="r" style="left:782px;top:147.5px;width:19px;height:13px;border-radius:5px;background:#6a18b0"></div>
<div class="t" style="left:788.60px;top:148.27px;font-size:11.5px;line-height:11.5px;color:#f4f0f8;">5</div>
<div class="r" style="left:936px;top:147.5px;width:19px;height:13px;border-radius:5px;background:#b01050"></div>
<div class="t" style="left:942.55px;top:148.27px;font-size:11.5px;line-height:11.5px;color:#f4f0f8;">8</div>
<div class="r" style="left:782px;top:162.5px;width:19px;height:13px;border-radius:5px;background:#2a14d8"></div>
<div class="t" style="left:788.55px;top:163.27px;font-size:11.5px;line-height:11.5px;color:#f4f0f8;">2</div>
<div class="r" style="left:870px;top:162.5px;width:19px;height:13px;border-radius:5px;background:#d81828"></div>
<div class="t" style="left:876.55px;top:163.27px;font-size:11.5px;line-height:11.5px;color:#f4f0f8;">9</div>
<div class="r" style="left:936px;top:162.5px;width:19px;height:13px;border-radius:5px;background:#901070"></div>
<div class="t" style="left:942.55px;top:163.27px;font-size:11.5px;line-height:11.5px;color:#f4f0f8;">7</div>
<div class="r" style="left:782px;top:177.5px;width:19px;height:13px;border-radius:5px;background:#0a10f0"></div>
<div class="t" style="left:788.35px;top:178.27px;font-size:11.5px;line-height:11.5px;color:#f4f0f8;">1</div>
<div class="r" style="left:782px;top:192.5px;width:19px;height:13px;border-radius:5px;background:#3a10d0"></div>
<div class="t" style="left:788.60px;top:193.27px;font-size:11.5px;line-height:11.5px;color:#f4f0f8;">3</div>
<div class="r" style="left:870px;top:192.5px;width:19px;height:13px;border-radius:5px;background:#e01020"></div>
<div class="t" style="left:873.15px;top:193.27px;font-size:11.5px;line-height:11.5px;color:#f4f0f8;">10</div>
<div class="r" style="left:936px;top:192.5px;width:19px;height:13px;border-radius:5px;background:#7a10a0"></div>
<div class="t" style="left:942.50px;top:193.27px;font-size:11.5px;line-height:11.5px;color:#f4f0f8;">6</div>
<div class="r" style="left:782px;top:207.5px;width:19px;height:13px;border-radius:5px;background:#4a10c8"></div>
<div class="t" style="left:788.60px;top:208.27px;font-size:11.5px;line-height:11.5px;color:#f4f0f8;">4</div>
<div class="t" style="left:796.75px;top:288.62px;font-size:12.5px;line-height:12.5px;color:#e6c88c;letter-spacing:0.111px;">Cell Chord</div>
<div class="t" style="left:772.15px;top:320.22px;font-size:12.5px;line-height:12.5px;color:#e6c88c;letter-spacing:-0.109px;">8 Layer Fill</div>
<div class="t" style="left:840.60px;top:318.95px;font-size:14px;line-height:14px;color:#d8d8d8;">Funct</div>
<div class="t" style="left:890.80px;top:318.95px;font-size:14px;line-height:14px;color:#d8d8d8;">Offst</div>
<div class="t" style="left:939.00px;top:318.95px;font-size:14px;line-height:14px;color:#d8d8d8;">Chord</div>
<div class="t" style="left:991.60px;top:318.95px;font-size:14px;line-height:14px;color:#d8d8d8;">Chans:</div>
<div class="t" style="left:1043.10px;top:318.95px;font-size:14px;line-height:14px;color:#d8d8d8;">By 1</div>
<div class="t" style="left:1089.30px;top:318.95px;font-size:14px;line-height:14px;color:#d8d8d8;">Transp</div>
<div class="t" style="left:1144.90px;top:318.95px;font-size:14px;line-height:14px;color:#d8d8d8;">Scale</div>
<div class="r" style="left:17.8px;top:348px;width:154.3px;height:188.5px;box-sizing:border-box;border:1px solid #c8c8c8;border-radius:12px;background:#0f131b"></div>
<div class="t" style="left:27.05px;top:358.52px;font-size:12.5px;line-height:12.5px;color:#e8f050;letter-spacing:-0.650px;">Arp</div>
<div class="t" style="left:70.50px;top:356.24px;font-size:10px;line-height:10px;color:#a0a4a8;letter-spacing:0.443px;">Rand Vel</div>
<div class="t" style="left:130.45px;top:355.87px;font-size:11.5px;line-height:11.5px;color:#f0a018;letter-spacing:1.300px;">15</div>
<div class="r" style="left:100.8px;top:372px;width:62.2px;height:1px;background:#50545c"></div>
<div class="r" style="left:115.0px;top:369.8px;width:3.3px;height:5.4px;background:#3c78e8"></div>
<div class="t" style="left:25.60px;top:381.44px;font-size:10px;line-height:10px;color:#a0a4a8;letter-spacing:0.900px;">Del</div>
<div class="t" style="left:52.15px;top:380.57px;font-size:11.5px;line-height:11.5px;color:#f0a018;letter-spacing:0.280px;">0.25 s</div>
<div class="t" style="left:98.40px;top:381.44px;font-size:10px;line-height:10px;color:#a0a4a8;letter-spacing:0.867px;">Mode</div>
<div class="t" style="left:139.15px;top:380.57px;font-size:11.5px;line-height:11.5px;color:#f0a018;letter-spacing:1.050px;">ord</div>
<div class="r" style="left:25.0px;top:397px;width:61.8px;height:1px;background:#50545c"></div>
<div class="r" style="left:49.2px;top:394.8px;width:3.3px;height:5.4px;background:#3c78e8"></div>
<div class="r" style="left:100.8px;top:397px;width:62.2px;height:1px;background:#50545c"></div>
<div class="r" style="left:100.8px;top:394.8px;width:3.3px;height:5.4px;background:#3c78e8"></div>
<div class="t" style="left:25.10px;top:406.13px;font-size:10px;line-height:10px;color:#a0a4a8;letter-spacing:-0.067px;">Octs</div>
<div class="t" style="left:64.95px;top:404.77px;font-size:11.5px;line-height:11.5px;color:#f0a018;">n</div>
<div class="t" style="left:97.30px;top:406.13px;font-size:10px;line-height:10px;color:#a0a4a8;letter-spacing:0.350px;">Times</div>
<div class="t" style="left:135.55px;top:404.77px;font-size:11.5px;line-height:11.5px;color:#f0a018;">x 1</div>
<div class="r" style="left:25.0px;top:422px;width:61.8px;height:1px;background:#50545c"></div>
<div class="r" style="left:25.0px;top:419.8px;width:3.3px;height:5.4px;background:#3c78e8"></div>
<div class="r" style="left:100.8px;top:422px;width:62.2px;height:1px;background:#50545c"></div>
<div class="r" style="left:100.8px;top:419.8px;width:3.3px;height:5.4px;background:#3c78e8"></div>
<div class="t" style="left:23.00px;top:431.44px;font-size:10px;line-height:10px;color:#c070e0;letter-spacing:0.200px;">Chans</div>
<div class="t" style="left:70.20px;top:430.64px;font-size:12px;line-height:12px;color:#f0a018;">1</div>
<div class="t" style="left:96.20px;top:431.44px;font-size:10px;line-height:10px;color:#70c070;letter-spacing:0.260px;">Scales</div>
<div class="t" style="left:146.20px;top:430.64px;font-size:12px;line-height:12px;color:#f0a018;">1</div>
<div class="r" style="left:25.2px;top:447px;width:61.8px;height:1px;background:#50545c"></div>
<div class="r" style="left:25.0px;top:444.8px;width:3.3px;height:5.4px;background:#3c78e8"></div>
<div class="r" style="left:101.0px;top:447px;width:62.19999999999999px;height:1px;background:#50545c"></div>
<div class="r" style="left:101.0px;top:444.8px;width:3.3px;height:5.4px;background:#3c78e8"></div>
<div class="t" style="left:23.10px;top:456.04px;font-size:10px;line-height:10px;color:#c070e0;letter-spacing:0.220px;">offset</div>
<div class="t" style="left:70.30px;top:454.94px;font-size:12px;line-height:12px;color:#f0a018;">0</div>
<div class="t" style="left:98.10px;top:456.04px;font-size:10px;line-height:10px;color:#70c070;letter-spacing:0.200px;">offset</div>
<div class="t" style="left:146.40px;top:454.94px;font-size:12px;line-height:12px;color:#f0a018;">0</div>
<div class="r" style="left:25.2px;top:472px;width:61.8px;height:1px;background:#50545c"></div>
<div class="r" style="left:25.2px;top:469.8px;width:3.3px;height:5.4px;background:#3c78e8"></div>
<div class="r" style="left:101.0px;top:472px;width:62.19999999999999px;height:1px;background:#50545c"></div>
<div class="r" style="left:101.0px;top:469.8px;width:3.3px;height:5.4px;background:#3c78e8"></div>
<div class="t" style="left:26.00px;top:481.13px;font-size:10px;line-height:10px;color:#c070e0;letter-spacing:1.350px;">inc</div>
<div class="t" style="left:70.40px;top:480.14px;font-size:12px;line-height:12px;color:#f0a018;">1</div>
<div class="t" style="left:101.20px;top:481.13px;font-size:10px;line-height:10px;color:#70c070;letter-spacing:1.400px;">inc</div>
<div class="t" style="left:146.20px;top:480.14px;font-size:12px;line-height:12px;color:#f0a018;">1</div>
<div class="r" style="left:25.2px;top:497px;width:61.8px;height:1px;background:#50545c"></div>
<div class="r" style="left:28.4px;top:494.8px;width:3.3px;height:5.4px;background:#3c78e8"></div>
<div class="r" style="left:101.0px;top:497px;width:62.19999999999999px;height:1px;background:#50545c"></div>
<div class="r" style="left:104.2px;top:494.8px;width:3.3px;height:5.4px;background:#3c78e8"></div>
<div class="t" style="left:27.35px;top:505.22px;font-size:12.5px;line-height:12.5px;color:#a0a4a8;letter-spacing:0.100px;">Beats</div>
<div class="t" style="left:100.70px;top:503.95px;font-size:14px;line-height:14px;color:#f0a018;letter-spacing:0.633px;">b 10</div>
<div class="r" style="left:29.2px;top:522px;width:127.8px;height:1px;background:#50545c"></div>
<div class="r" style="left:34.3px;top:519.8px;width:3.3px;height:5.4px;background:#3c78e8"></div>
<div class="r" style="left:782.6px;top:348px;width:154.3px;height:188.5px;box-sizing:border-box;border:1px solid #c8c8c8;border-radius:12px;background:#0f131b"></div>
<div class="t" style="left:791.25px;top:358.52px;font-size:12.5px;line-height:12.5px;color:#30e830;letter-spacing:0.100px;">Echo</div>
<div class="t" style="left:839.60px;top:356.24px;font-size:10px;line-height:10px;color:#a0a4a8;letter-spacing:0.443px;">Rand Vel</div>
<div class="t" style="left:895.25px;top:355.87px;font-size:11.5px;line-height:11.5px;color:#f0a018;letter-spacing:1.300px;">15</div>
<div class="r" style="left:865.5999999999999px;top:372px;width:62.200000000000045px;height:1px;background:#50545c"></div>
<div class="r" style="left:879.8px;top:369.8px;width:3.3px;height:5.4px;background:#3c78e8"></div>
<div class="t" style="left:790.40px;top:381.44px;font-size:10px;line-height:10px;color:#a0a4a8;letter-spacing:0.900px;">Del</div>
<div class="t" style="left:813.55px;top:378.42px;font-size:12.5px;line-height:12.5px;color:#f010f0;">Manual</div>
<div class="t" style="left:867.60px;top:381.44px;font-size:10px;line-height:10px;color:#a0a4a8;letter-spacing:1.200px;">Tot</div>
<div class="t" style="left:893.25px;top:380.57px;font-size:11.5px;line-height:11.5px;color:#f0a018;letter-spacing:0.500px;">5.0</div>
<div class="t" style="left:918.05px;top:380.41px;font-size:10.5px;line-height:10.5px;color:#f0a018;">m</div>
<div class="r" style="left:789.8px;top:397px;width:61.799999999999955px;height:1px;background:#50545c"></div>
<div class="r" style="left:790.5px;top:394.8px;width:3.3px;height:5.4px;background:#3c78e8"></div>
<div class="r" style="left:865.5999999999999px;top:397px;width:62.200000000000045px;height:1px;background:#50545c"></div>
<div class="r" style="left:912.0999999999999px;top:394.8px;width:3.3px;height:5.4px;background:#3c78e8"></div>
<div class="t" style="left:789.90px;top:406.13px;font-size:10px;line-height:10px;color:#a0a4a8;letter-spacing:-0.067px;">Octs</div>
<div class="t" style="left:885.75px;top:404.82px;font-size:12.5px;line-height:12.5px;color:#f0a018;letter-spacing:1.167px;">u|d3</div>
<div class="r" style="left:794.0px;top:422px;width:127.89999999999998px;height:1px;background:#50545c"></div>
<div class="r" style="left:800.0999999999999px;top:419.8px;width:3.3px;height:5.4px;background:#3c78e8"></div>
<div class="t" style="left:787.80px;top:431.44px;font-size:10px;line-height:10px;color:#c070e0;letter-spacing:0.200px;">Chans</div>
<div class="t" style="left:833.20px;top:430.64px;font-size:12px;line-height:12px;color:#f0a018;letter-spacing:1.000px;">11</div>
<div class="t" style="left:861.00px;top:431.44px;font-size:10px;line-height:10px;color:#70c070;letter-spacing:0.260px;">Scales</div>
<div class="t" style="left:911.00px;top:430.64px;font-size:12px;line-height:12px;color:#f0a018;">1</div>
<div class="r" style="left:790.0px;top:447px;width:61.799999999999955px;height:1px;background:#50545c"></div>
<div class="r" style="left:828.1999999999999px;top:444.8px;width:3.3px;height:5.4px;background:#3c78e8"></div>
<div class="r" style="left:865.8px;top:447px;width:62.200000000000045px;height:1px;background:#50545c"></div>
<div class="r" style="left:865.8px;top:444.8px;width:3.3px;height:5.4px;background:#3c78e8"></div>
<div class="t" style="left:787.90px;top:456.04px;font-size:10px;line-height:10px;color:#c070e0;letter-spacing:0.220px;">offset</div>
<div class="t" style="left:835.10px;top:454.94px;font-size:12px;line-height:12px;color:#f0a018;">0</div>
<div class="t" style="left:862.90px;top:456.04px;font-size:10px;line-height:10px;color:#70c070;letter-spacing:0.200px;">offset</div>
<div class="t" style="left:911.20px;top:454.94px;font-size:12px;line-height:12px;color:#f0a018;">0</div>
<div class="r" style="left:790.0px;top:472px;width:61.799999999999955px;height:1px;background:#50545c"></div>
<div class="r" style="left:790.0px;top:469.8px;width:3.3px;height:5.4px;background:#3c78e8"></div>
<div class="r" style="left:865.8px;top:472px;width:62.200000000000045px;height:1px;background:#50545c"></div>
<div class="r" style="left:865.8px;top:469.8px;width:3.3px;height:5.4px;background:#3c78e8"></div>
<div class="t" style="left:790.80px;top:481.13px;font-size:10px;line-height:10px;color:#c070e0;letter-spacing:1.350px;">inc</div>
<div class="t" style="left:835.20px;top:480.14px;font-size:12px;line-height:12px;color:#f0a018;">1</div>
<div class="t" style="left:866.00px;top:481.13px;font-size:10px;line-height:10px;color:#70c070;letter-spacing:1.400px;">inc</div>
<div class="t" style="left:911.00px;top:480.14px;font-size:12px;line-height:12px;color:#f0a018;">1</div>
<div class="r" style="left:790.0px;top:497px;width:61.799999999999955px;height:1px;background:#50545c"></div>
<div class="r" style="left:793.1999999999999px;top:494.8px;width:3.3px;height:5.4px;background:#3c78e8"></div>
<div class="r" style="left:865.8px;top:497px;width:62.200000000000045px;height:1px;background:#50545c"></div>
<div class="r" style="left:869.0px;top:494.8px;width:3.3px;height:5.4px;background:#3c78e8"></div>
<div class="t" style="left:792.15px;top:505.22px;font-size:12.5px;line-height:12.5px;color:#a0a4a8;letter-spacing:0.100px;">Beats</div>
<div class="t" style="left:865.70px;top:503.95px;font-size:14px;line-height:14px;color:#f0a018;letter-spacing:0.225px;">b 251</div>
<div class="r" style="left:794.0px;top:522px;width:127.79999999999995px;height:1px;background:#50545c"></div>
<div class="r" style="left:919.0999999999999px;top:519.8px;width:3.3px;height:5.4px;background:#3c78e8"></div>
<div class="t" style="left:21.35px;top:625.12px;font-size:12.5px;line-height:12.5px;color:#e6c88c;letter-spacing:0.138px;">Transpose</div>
<div class="r" style="left:87px;top:616px;width:49px;height:30px;box-sizing:border-box;border:1px solid #c8c8c8;border-radius:8px;background:#000"></div>
<div class="r" style="left:91px;top:620px;width:41px;height:22px;background:#0f131b;border-radius:1px"></div>
<div class="t" style="left:104.80px;top:624.50px;font-size:13px;line-height:13px;color:#30e030;">0</div>
<div class="t" style="left:170.95px;top:625.12px;font-size:12.5px;line-height:12.5px;color:#e6c88c;">Scale</div>
<div class="r" style="left:212px;top:616px;width:41px;height:30px;box-sizing:border-box;border:1px solid #c8c8c8;border-radius:8px;background:#000"></div>
<div class="r" style="left:216px;top:620px;width:33px;height:22px;background:#0f131b;border-radius:1px"></div>
<div class="t" style="left:223.70px;top:624.50px;font-size:13px;line-height:13px;color:#e04848;">1</div>
<div class="t" style="left:269.80px;top:623.25px;font-size:14px;line-height:14px;color:#e86464;">C</div>
<div class="t" style="left:295.70px;top:623.25px;font-size:14px;line-height:14px;color:#e86464;letter-spacing:0.087px;">Melodic Minor Dn</div>
<div class="t" style="left:420.70px;top:623.25px;font-size:14px;line-height:14px;color:#e86464;">c</div>
<div class="t" style="left:440.20px;top:623.25px;font-size:14px;line-height:14px;color:#e86464;">7</div>
<div class="t" style="left:491.10px;top:617.44px;font-size:12px;line-height:12px;color:#e6c88c;letter-spacing:0.246px;">Copy Transpose</div>
<div class="t" style="left:491.30px;top:632.44px;font-size:12px;line-height:12px;color:#e6c88c;letter-spacing:0.147px;">&amp; Scale Settings</div>
<div class="r" style="left:592px;top:616px;width:127px;height:29px;box-sizing:border-box;border:1px solid #c8c8c8;border-radius:8px;background:#000"></div>
<div class="r" style="left:596px;top:620px;width:119px;height:21px;background:#0f131b;border-radius:1px"></div>
<div class="t" style="left:602.95px;top:624.72px;font-size:12.5px;line-height:12.5px;color:#6a78f0;">Kb A</div>
<div class="t" style="left:643.15px;top:624.72px;font-size:12.5px;line-height:12.5px;color:#6a78f0;">Kb B</div>
<div class="t" style="left:679.35px;top:624.72px;font-size:12.5px;line-height:12.5px;color:#6a78f0;">Guit</div>
<div class="t" style="left:62.75px;top:664.77px;font-size:13.5px;line-height:13.5px;color:#c8d0dc;">251</div>
<div class="t" style="left:722.15px;top:665.07px;font-size:13.5px;line-height:13.5px;color:#c8d0dc;">3</div>
<div class="r" style="left:213px;top:657px;width:499px;height:29px;background:#2b3247;border-radius:4px"></div>
<div class="r" style="left:222.5px;top:666.6px;width:300px;height:6.8px;background:#f89c28;border-radius:3.4px"></div>
<div class="r" style="left:522.5px;top:666.6px;width:60px;height:6.8px;background:#4a78f0;border-radius:3.4px"></div>
<div class="r" style="left:582.5px;top:666.6px;width:120px;height:6.8px;background:#f89c28;border-radius:3.4px"></div>
<div class="r" style="left:223.4px;top:660.8px;width:1.2px;height:18.4px;background:#d0d0d0"></div>
<div class="r" style="left:283.4px;top:662.8px;width:1.2px;height:14.4px;background:#d0d0d0"></div>
<div class="r" style="left:343.4px;top:662.8px;width:1.2px;height:14.4px;background:#d0d0d0"></div>
<div class="r" style="left:403.4px;top:662.8px;width:1.2px;height:14.4px;background:#d0d0d0"></div>
<div class="r" style="left:463.4px;top:662.8px;width:1.2px;height:14.4px;background:#d0d0d0"></div>
<div class="r" style="left:523.4px;top:662.8px;width:1.2px;height:14.4px;background:#d0d0d0"></div>
<div class="r" style="left:583.4px;top:662.8px;width:1.2px;height:14.4px;background:#d0d0d0"></div>
<div class="r" style="left:643.4px;top:662.8px;width:1.2px;height:14.4px;background:#d0d0d0"></div>
<div class="r" style="left:703.4px;top:660.8px;width:1.2px;height:18.4px;background:#d0d0d0"></div>
<div class="t" style="left:790.20px;top:562.94px;font-size:12px;line-height:12px;color:#e6c88c;letter-spacing:0.147px;">Keyboard Outline</div>
<div class="t" style="left:900.75px;top:561.67px;font-size:13.5px;line-height:13.5px;color:#30e030;">88</div>
<div class="t" style="left:808.30px;top:585.74px;font-size:12px;line-height:12px;color:#e6c88c;letter-spacing:-0.062px;">Velocity Curve</div>
<div class="r" style="left:811px;top:605px;width:65px;height:66px;box-sizing:border-box;border:1px solid #a0a0a0"></div>
<svg class="r" style="left:0;top:0" width="1193" height="804"><polyline points="811.8,670.2 813.8,669.8 815.9,669.0 817.9,668.1 820.0,667.0 822.0,665.7 824.1,664.4 826.1,663.0 828.1,661.4 830.2,659.8 832.2,658.0 834.3,656.2 836.3,654.4 838.4,652.4 840.4,650.4 842.4,648.3 844.5,646.2 846.5,644.0 848.6,641.7 850.6,639.4 852.7,637.0 854.7,634.5 856.8,632.1 858.8,629.5 860.8,626.9 862.9,624.3 864.9,621.6 867.0,618.9 869.0,616.1 871.1,613.3 873.1,610.4" fill="none" stroke="#18c818" stroke-width="1.2"/></svg>
<div class="t" style="left:784.55px;top:623.92px;font-size:12.5px;line-height:12.5px;color:#c8d0e0;">Out</div>
<div class="t" style="left:787.15px;top:640.02px;font-size:12.5px;line-height:12.5px;color:#c8d0e0;">Vel</div>
<div class="t" style="left:828.85px;top:674.92px;font-size:12.5px;line-height:12.5px;color:#c8d0e0;">In Vel</div>
<div class="t" style="left:47.95px;top:710.74px;font-size:12px;line-height:12px;color:#e6c88c;">K</div>
<div class="t" style="left:25.15px;top:724.72px;font-size:12.5px;line-height:12.5px;color:#e6c88c;letter-spacing:0.014px;">Function</div>
<div class="t" style="left:30.55px;top:738.82px;font-size:12.5px;line-height:12.5px;color:#e6c88c;letter-spacing:0.160px;">Colors</div>
<div class="t" style="left:986.00px;top:724.44px;font-size:12px;line-height:12px;color:#e6c88c;">88</div>
<div class="r" style="left:85px;top:708px;width:882px;height:46px;background:#000"></div>
<div class="r" style="left:86px;top:709px;width:16px;height:45px;background:#2c9ef8"></div>
<div class="r" style="left:103px;top:709px;width:16px;height:45px;background:#2c9ef8"></div>
<div class="r" style="left:120px;top:709px;width:17px;height:45px;background:#2c9ef8"></div>
<div class="r" style="left:138px;top:709px;width:16px;height:45px;background:#2c9ef8"></div>
<div class="r" style="left:155px;top:709px;width:16px;height:45px;background:#2c9ef8"></div>
<div class="r" style="left:172px;top:709px;width:16px;height:45px;background:#2c9ef8"></div>
<div class="r" style="left:189px;top:709px;width:16px;height:45px;background:#2c9ef8"></div>
<div class="r" style="left:206px;top:709px;width:16px;height:45px;background:#2c9ef8"></div>
<div class="r" style="left:223px;top:709px;width:16px;height:45px;background:#2c9ef8"></div>
<div class="r" style="left:240px;top:709px;width:17px;height:45px;background:#fe8000"></div>
<div class="r" style="left:258px;top:709px;width:16px;height:45px;background:#fe8000"></div>
<div class="r" style="left:275px;top:709px;width:16px;height:45px;background:#fe8000"></div>
<div class="r" style="left:292px;top:709px;width:16px;height:45px;background:#fe8000"></div>
<div class="r" style="left:309px;top:709px;width:16px;height:45px;background:#fe8000"></div>
<div class="r" style="left:326px;top:709px;width:16px;height:45px;background:#fe8000"></div>
<div class="r" style="left:343px;top:709px;width:16px;height:45px;background:#fe8000"></div>
<div class="r" style="left:360px;top:709px;width:17px;height:45px;background:#fe8000"></div>
<div class="r" style="left:378px;top:709px;width:16px;height:45px;background:#e050f0"></div>
<div class="r" style="left:395px;top:709px;width:16px;height:45px;background:#fe8000"></div>
<div class="r" style="left:412px;top:709px;width:16px;height:45px;background:#fe8000"></div>
<div class="r" style="left:429px;top:709px;width:16px;height:45px;background:#fe8000"></div>
<div class="r" style="left:446px;top:709px;width:16px;height:45px;background:#fe8000"></div>
<div class="r" style="left:463px;top:709px;width:16px;height:45px;background:#fe8000"></div>
<div class="r" style="left:480px;top:709px;width:17px;height:45px;background:#fe8000"></div>
<div class="r" style="left:498px;top:709px;width:16px;height:45px;background:#fe8000"></div>
<div class="r" style="left:515px;top:709px;width:16px;height:45px;background:#fe8000"></div>
<div class="r" style="left:532px;top:709px;width:16px;height:45px;background:#2c9ef8"></div>
<div class="r" style="left:549px;top:709px;width:16px;height:45px;background:#2c9ef8"></div>
<div class="r" style="left:566px;top:709px;width:16px;height:45px;background:#2c9ef8"></div>
<div class="r" style="left:583px;top:709px;width:16px;height:45px;background:#2c9ef8"></div>
<div class="r" style="left:600px;top:709px;width:17px;height:45px;background:#2c9ef8"></div>
<div class="r" style="left:618px;top:709px;width:16px;height:45px;background:#2c9ef8"></div>
<div class="r" style="left:635px;top:709px;width:16px;height:45px;background:#2c9ef8"></div>
<div class="r" style="left:652px;top:709px;width:16px;height:45px;background:#2c9ef8"></div>
<div class="r" style="left:669px;top:709px;width:16px;height:45px;background:#2c9ef8"></div>
<div class="r" style="left:686px;top:709px;width:16px;height:45px;background:#2c9ef8"></div>
<div class="r" style="left:703px;top:709px;width:16px;height:45px;background:#2c9ef8"></div>
<div class="r" style="left:720px;top:709px;width:17px;height:45px;background:#2c9ef8"></div>
<div class="r" style="left:738px;top:709px;width:16px;height:45px;background:#2c9ef8"></div>
<div class="r" style="left:755px;top:709px;width:16px;height:45px;background:#2c9ef8"></div>
<div class="r" style="left:772px;top:709px;width:16px;height:45px;background:#2c9ef8"></div>
<div class="r" style="left:789px;top:709px;width:16px;height:45px;background:#2c9ef8"></div>
<div class="r" style="left:806px;top:709px;width:16px;height:45px;background:#2c9ef8"></div>
<div class="r" style="left:823px;top:709px;width:16px;height:45px;background:#2c9ef8"></div>
<div class="r" style="left:840px;top:709px;width:17px;height:45px;background:#2c9ef8"></div>
<div class="r" style="left:858px;top:709px;width:16px;height:45px;background:#2c9ef8"></div>
<div class="r" style="left:875px;top:709px;width:16px;height:45px;background:#2c9ef8"></div>
<div class="r" style="left:892px;top:709px;width:16px;height:45px;background:#2c9ef8"></div>
<div class="r" style="left:909px;top:709px;width:16px;height:45px;background:#2c9ef8"></div>
<div class="r" style="left:926px;top:709px;width:16px;height:45px;background:#2c9ef8"></div>
<div class="r" style="left:943px;top:709px;width:16px;height:45px;background:#2c9ef8"></div>
<div class="r" style="left:960px;top:709px;width:16.5px;height:45px;background:#2c9ef8"></div>
<div class="r" style="left:98.5px;top:709px;width:12.4px;height:25px;background:#000;border-radius:0 0 2px 2px"></div>
<div class="r" style="left:99.5px;top:709px;width:10.4px;height:23.8px;background:#88f880;border-radius:0 0 2px 2px"></div>
<div class="r" style="left:128.5px;top:709px;width:12.4px;height:25px;background:#000;border-radius:0 0 2px 2px"></div>
<div class="r" style="left:129.5px;top:709px;width:10.4px;height:23.8px;background:#2c9ef8;border-radius:0 0 2px 2px"></div>
<div class="r" style="left:148.5px;top:709px;width:12.4px;height:25px;background:#000;border-radius:0 0 2px 2px"></div>
<div class="r" style="left:149.5px;top:709px;width:10.4px;height:23.8px;background:#2c9ef8;border-radius:0 0 2px 2px"></div>
<div class="r" style="left:178.5px;top:709px;width:12.4px;height:25px;background:#000;border-radius:0 0 2px 2px"></div>
<div class="r" style="left:179.5px;top:709px;width:10.4px;height:23.8px;background:#2c9ef8;border-radius:0 0 2px 2px"></div>
<div class="r" style="left:198.5px;top:709px;width:12.4px;height:25px;background:#000;border-radius:0 0 2px 2px"></div>
<div class="r" style="left:199.5px;top:709px;width:10.4px;height:23.8px;background:#2c9ef8;border-radius:0 0 2px 2px"></div>
<div class="r" style="left:218.5px;top:709px;width:12.4px;height:25px;background:#000;border-radius:0 0 2px 2px"></div>
<div class="r" style="left:219.5px;top:709px;width:10.4px;height:23.8px;background:#2c9ef8;border-radius:0 0 2px 2px"></div>
<div class="r" style="left:248.5px;top:709px;width:12.4px;height:25px;background:#000;border-radius:0 0 2px 2px"></div>
<div class="r" style="left:249.5px;top:709px;width:10.4px;height:23.8px;background:#fe8000;border-radius:0 0 2px 2px"></div>
<div class="r" style="left:268.5px;top:709px;width:12.4px;height:25px;background:#000;border-radius:0 0 2px 2px"></div>
<div class="r" style="left:269.5px;top:709px;width:10.4px;height:23.8px;background:#fe8000;border-radius:0 0 2px 2px"></div>
<div class="r" style="left:298.5px;top:709px;width:12.4px;height:25px;background:#000;border-radius:0 0 2px 2px"></div>
<div class="r" style="left:299.5px;top:709px;width:10.4px;height:23.8px;background:#fe8000;border-radius:0 0 2px 2px"></div>
<div class="r" style="left:318.5px;top:709px;width:12.4px;height:25px;background:#000;border-radius:0 0 2px 2px"></div>
<div class="r" style="left:319.5px;top:709px;width:10.4px;height:23.8px;background:#fe8000;border-radius:0 0 2px 2px"></div>
<div class="r" style="left:338.5px;top:709px;width:12.4px;height:25px;background:#000;border-radius:0 0 2px 2px"></div>
<div class="r" style="left:339.5px;top:709px;width:10.4px;height:23.8px;background:#fe8000;border-radius:0 0 2px 2px"></div>
<div class="r" style="left:368.5px;top:709px;width:12.4px;height:25px;background:#000;border-radius:0 0 2px 2px"></div>
<div class="r" style="left:369.5px;top:709px;width:10.4px;height:23.8px;background:#fe8000;border-radius:0 0 2px 2px"></div>
<div class="r" style="left:388.5px;top:709px;width:12.4px;height:25px;background:#000;border-radius:0 0 2px 2px"></div>
<div class="r" style="left:389.5px;top:709px;width:10.4px;height:23.8px;background:#fe8000;border-radius:0 0 2px 2px"></div>
<div class="r" style="left:418.5px;top:709px;width:12.4px;height:25px;background:#000;border-radius:0 0 2px 2px"></div>
<div class="r" style="left:419.5px;top:709px;width:10.4px;height:23.8px;background:#fe8000;border-radius:0 0 2px 2px"></div>
<div class="r" style="left:438.5px;top:709px;width:12.4px;height:25px;background:#000;border-radius:0 0 2px 2px"></div>
<div class="r" style="left:439.5px;top:709px;width:10.4px;height:23.8px;background:#fe8000;border-radius:0 0 2px 2px"></div>
<div class="r" style="left:458.5px;top:709px;width:12.4px;height:25px;background:#000;border-radius:0 0 2px 2px"></div>
<div class="r" style="left:459.5px;top:709px;width:10.4px;height:23.8px;background:#fe8000;border-radius:0 0 2px 2px"></div>
<div class="r" style="left:488.5px;top:709px;width:12.4px;height:25px;background:#000;border-radius:0 0 2px 2px"></div>
<div class="r" style="left:489.5px;top:709px;width:10.4px;height:23.8px;background:#fe8000;border-radius:0 0 2px 2px"></div>
<div class="r" style="left:508.5px;top:709px;width:12.4px;height:25px;background:#000;border-radius:0 0 2px 2px"></div>
<div class="r" style="left:509.5px;top:709px;width:10.4px;height:23.8px;background:#fe8000;border-radius:0 0 2px 2px"></div>
<div class="r" style="left:538.5px;top:709px;width:12.4px;height:25px;background:#000;border-radius:0 0 2px 2px"></div>
<div class="r" style="left:539.5px;top:709px;width:10.4px;height:23.8px;background:#2c9ef8;border-radius:0 0 2px 2px"></div>
<div class="r" style="left:558.5px;top:709px;width:12.4px;height:25px;background:#000;border-radius:0 0 2px 2px"></div>
<div class="r" style="left:559.5px;top:709px;width:10.4px;height:23.8px;background:#2c9ef8;border-radius:0 0 2px 2px"></div>
<div class="r" style="left:578.5px;top:709px;width:12.4px;height:25px;background:#000;border-radius:0 0 2px 2px"></div>
<div class="r" style="left:579.5px;top:709px;width:10.4px;height:23.8px;background:#2c9ef8;border-radius:0 0 2px 2px"></div>
<div class="r" style="left:608.5px;top:709px;width:12.4px;height:25px;background:#000;border-radius:0 0 2px 2px"></div>
<div class="r" style="left:609.5px;top:709px;width:10.4px;height:23.8px;background:#2c9ef8;border-radius:0 0 2px 2px"></div>
<div class="r" style="left:628.5px;top:709px;width:12.4px;height:25px;background:#000;border-radius:0 0 2px 2px"></div>
<div class="r" style="left:629.5px;top:709px;width:10.4px;height:23.8px;background:#2c9ef8;border-radius:0 0 2px 2px"></div>
<div class="r" style="left:658.5px;top:709px;width:12.4px;height:25px;background:#000;border-radius:0 0 2px 2px"></div>
<div class="r" style="left:659.5px;top:709px;width:10.4px;height:23.8px;background:#2c9ef8;border-radius:0 0 2px 2px"></div>
<div class="r" style="left:678.5px;top:709px;width:12.4px;height:25px;background:#000;border-radius:0 0 2px 2px"></div>
<div class="r" style="left:679.5px;top:709px;width:10.4px;height:23.8px;background:#2c9ef8;border-radius:0 0 2px 2px"></div>
<div class="r" style="left:698.5px;top:709px;width:12.4px;height:25px;background:#000;border-radius:0 0 2px 2px"></div>
<div class="r" style="left:699.5px;top:709px;width:10.4px;height:23.8px;background:#2c9ef8;border-radius:0 0 2px 2px"></div>
<div class="r" style="left:728.5px;top:709px;width:12.4px;height:25px;background:#000;border-radius:0 0 2px 2px"></div>
<div class="r" style="left:729.5px;top:709px;width:10.4px;height:23.8px;background:#2c9ef8;border-radius:0 0 2px 2px"></div>
<div class="r" style="left:748.5px;top:709px;width:12.4px;height:25px;background:#000;border-radius:0 0 2px 2px"></div>
<div class="r" style="left:749.5px;top:709px;width:10.4px;height:23.8px;background:#2c9ef8;border-radius:0 0 2px 2px"></div>
<div class="r" style="left:778.5px;top:709px;width:12.4px;height:25px;background:#000;border-radius:0 0 2px 2px"></div>
<div class="r" style="left:779.5px;top:709px;width:10.4px;height:23.8px;background:#2c9ef8;border-radius:0 0 2px 2px"></div>
<div class="r" style="left:798.5px;top:709px;width:12.4px;height:25px;background:#000;border-radius:0 0 2px 2px"></div>
<div class="r" style="left:799.5px;top:709px;width:10.4px;height:23.8px;background:#2c9ef8;border-radius:0 0 2px 2px"></div>
<div class="r" style="left:818.5px;top:709px;width:12.4px;height:25px;background:#000;border-radius:0 0 2px 2px"></div>
<div class="r" style="left:819.5px;top:709px;width:10.4px;height:23.8px;background:#2c9ef8;border-radius:0 0 2px 2px"></div>
<div class="r" style="left:848.5px;top:709px;width:12.4px;height:25px;background:#000;border-radius:0 0 2px 2px"></div>
<div class="r" style="left:849.5px;top:709px;width:10.4px;height:23.8px;background:#2c9ef8;border-radius:0 0 2px 2px"></div>
<div class="r" style="left:868.5px;top:709px;width:12.4px;height:25px;background:#000;border-radius:0 0 2px 2px"></div>
<div class="r" style="left:869.5px;top:709px;width:10.4px;height:23.8px;background:#2c9ef8;border-radius:0 0 2px 2px"></div>
<div class="r" style="left:898.5px;top:709px;width:12.4px;height:25px;background:#000;border-radius:0 0 2px 2px"></div>
<div class="r" style="left:899.5px;top:709px;width:10.4px;height:23.8px;background:#2c9ef8;border-radius:0 0 2px 2px"></div>
<div class="r" style="left:918.5px;top:709px;width:12.4px;height:25px;background:#000;border-radius:0 0 2px 2px"></div>
<div class="r" style="left:919.5px;top:709px;width:10.4px;height:23.8px;background:#2c9ef8;border-radius:0 0 2px 2px"></div>
<div class="r" style="left:938.5px;top:709px;width:12.4px;height:25px;background:#000;border-radius:0 0 2px 2px"></div>
<div class="r" style="left:939.5px;top:709px;width:10.4px;height:23.8px;background:#2c9ef8;border-radius:0 0 2px 2px"></div>
<svg class="r" style="left:0;top:0" width="1193" height="804"><path d="M86.5 755 V776 M120.5 755 V776 M240.5 755 V776 M360.5 755 V776 M480.5 755 V776 M600.5 755 V776 M720.5 755 V776 M840.5 755 V776 M960.5 755 V776 M976.5 755 V776 M86 776.5 H977" stroke="#9a9a9a" stroke-width="1"/></svg>
<div class="t" style="left:99.50px;top:759.64px;font-size:12px;line-height:12px;color:#e6c88c;">1</div>
<div class="t" style="left:171.95px;top:759.64px;font-size:12px;line-height:12px;color:#e6c88c;">2</div>
<div class="t" style="left:292.00px;top:759.64px;font-size:12px;line-height:12px;color:#e6c88c;">3</div>
<div class="t" style="left:412.05px;top:759.64px;font-size:12px;line-height:12px;color:#e6c88c;">4</div>
<div class="t" style="left:531.95px;top:759.64px;font-size:12px;line-height:12px;color:#e6c88c;">5</div>
<div class="t" style="left:651.90px;top:759.64px;font-size:12px;line-height:12px;color:#e6c88c;">6</div>
<div class="t" style="left:771.95px;top:759.64px;font-size:12px;line-height:12px;color:#e6c88c;">7</div>
<div class="t" style="left:891.95px;top:759.64px;font-size:12px;line-height:12px;color:#e6c88c;">8</div>
<div class="t" style="left:964.70px;top:759.64px;font-size:12px;line-height:12px;color:#e6c88c;">9</div>
<div class="r" style="left:0px;top:0px;width:1193px;height:1px;background:#1a1a1a"></div>
<div class="r" style="left:0px;top:0px;width:1px;height:804px;background:#1a1a1a"></div>
<div class="r" style="left:1192px;top:0px;width:1px;height:804px;background:#1a1a1a"></div>
<div class="r" style="left:0px;top:803px;width:1193px;height:1px;background:#1a1a1a"></div>
</body></html>
